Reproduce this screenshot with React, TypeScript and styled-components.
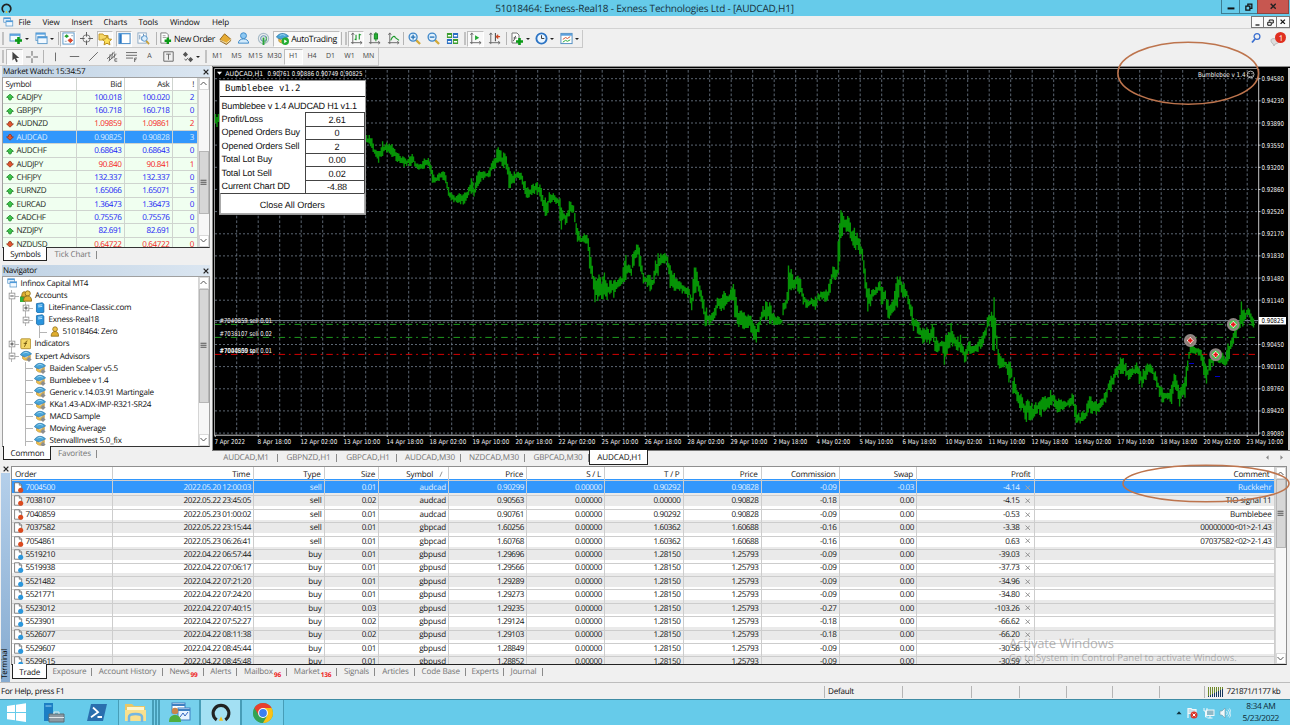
import React from "react";
import styled, { createGlobalStyle, css } from "styled-components";

const GlobalStyle = createGlobalStyle`
  * { box-sizing: border-box; }
  html, body { margin: 0; padding: 0; overflow: hidden; }
  body {
    font-family: "Open Sans", "Noto Sans", sans-serif;
    font-size: 8.1px;
    letter-spacing: -0.36px;
    color: #0c0c0c;
    text-rendering: geometricPrecision;
  }
  svg { display: block; flex: none; }
`;

/* ---------- data ---------- */

const quotes: [string, string, string, string, boolean][] = [
  ["CADJPY", "100.018", "100.020", "2", true],
  ["GBPJPY", "160.718", "160.718", "0", true],
  ["AUDNZD", "1.09859", "1.09861", "2", false],
  ["AUDCAD", "0.90825", "0.90828", "3", false],
  ["AUDCHF", "0.68643", "0.68643", "0", true],
  ["AUDJPY", "90.840", "90.841", "1", false],
  ["CHFJPY", "132.337", "132.337", "0", true],
  ["EURNZD", "1.65066", "1.65071", "5", true],
  ["EURCAD", "1.36473", "1.36473", "0", true],
  ["CADCHF", "0.75576", "0.75576", "0", true],
  ["NZDJPY", "82.691", "82.691", "0", true],
  ["NZDUSD", "0.64722", "0.64722", "0", false],
];

const advisors = [
  "Baiden Scalper v5.5",
  "Bumblebee v 1.4",
  "Generic v.14.03.91 Martingale",
  "KKa1.43-ADX-IMP-R321-SR24",
  "MACD Sample",
  "Moving Average",
  "StenvallInvest 5.0_fix",
];

const orders = [
  ["7004500", "2022.05.20 12:00:03", "sell", "0.01", "audcad", "0.90299", "0.00000", "0.90292", "0.90828", "-0.09", "-0.03", "-4.14", "Ruckkehr"],
  ["7038107", "2022.05.22 23:45:05", "sell", "0.02", "audcad", "0.90563", "0.00000", "0.00000", "0.90828", "-0.18", "0.00", "-4.15", "TIO signal 11"],
  ["7040859", "2022.05.23 01:00:02", "sell", "0.01", "audcad", "0.90761", "0.00000", "0.90292", "0.90828", "-0.09", "0.00", "-0.53", "Bumblebee"],
  ["7037582", "2022.05.22 23:15:44", "sell", "0.01", "gbpcad", "1.60256", "0.00000", "1.60362", "1.60688", "-0.16", "0.00", "-3.38", "00000000<01>2-1.43"],
  ["7054861", "2022.05.23 06:26:41", "sell", "0.01", "gbpcad", "1.60768", "0.00000", "1.60362", "1.60688", "-0.16", "0.00", "0.63", "07037582<02>2-1.43"],
  ["5519210", "2022.04.22 06:57:44", "buy", "0.01", "gbpusd", "1.29696", "0.00000", "1.28150", "1.25793", "-0.09", "0.00", "-39.03", ""],
  ["5519938", "2022.04.22 07:06:17", "buy", "0.01", "gbpusd", "1.29566", "0.00000", "1.28150", "1.25793", "-0.09", "0.00", "-37.73", ""],
  ["5521482", "2022.04.22 07:21:20", "buy", "0.01", "gbpusd", "1.29289", "0.00000", "1.28150", "1.25793", "-0.09", "0.00", "-34.96", ""],
  ["5521771", "2022.04.22 07:24:20", "buy", "0.01", "gbpusd", "1.29273", "0.00000", "1.28150", "1.25793", "-0.09", "0.00", "-34.80", ""],
  ["5523012", "2022.04.22 07:40:15", "buy", "0.03", "gbpusd", "1.29235", "0.00000", "1.28150", "1.25793", "-0.27", "0.00", "-103.26", ""],
  ["5523901", "2022.04.22 07:52:27", "buy", "0.02", "gbpusd", "1.29124", "0.00000", "1.28150", "1.25793", "-0.18", "0.00", "-66.62", ""],
  ["5526077", "2022.04.22 08:11:38", "buy", "0.02", "gbpusd", "1.29103", "0.00000", "1.28150", "1.25793", "-0.18", "0.00", "-66.20", ""],
  ["5529607", "2022.04.22 08:45:44", "buy", "0.01", "gbpusd", "1.28849", "0.00000", "1.28150", "1.25793", "-0.09", "0.00", "-30.56", ""],
  ["5529615", "2022.04.22 08:45:48", "buy", "0.01", "gbpusd", "1.28852", "0.00000", "1.28150", "1.25793", "-0.09", "0.00", "-30.59", ""],
];

const orderHeads = ["Order", "Time", "Type", "Size", "Symbol", "Price", "S / L", "T / P", "Price", "Commission", "Swap", "Profit", "Comment"];

const dates = [
  "7 Apr 2022", "8 Apr 18:00", "12 Apr 02:00", "13 Apr 10:00", "14 Apr 18:00", "18 Apr 02:00", "19 Apr 10:00",
  "20 Apr 18:00", "22 Apr 02:00", "25 Apr 10:00", "26 Apr 18:00", "28 Apr 02:00", "29 Apr 10:00", "2 May 18:00",
  "4 May 02:00", "5 May 10:00", "6 May 18:00", "10 May 02:00", "11 May 10:00", "12 May 18:00", "16 May 02:00",
  "17 May 10:00", "18 May 18:00", "20 May 02:00", "23 May 10:00",
];

const prices = [
  "0.94580", "0.94230", "0.93890", "0.93550", "0.93200", "0.92860", "0.92520", "0.92170", "0.91830",
  "0.91480", "0.91140", "", "0.90450", "0.90110", "0.89760", "0.89420", "0.89080",
];

// x, high, low of the price series
const series = [
  366,136,143, 369,136,144, 372,138,148, 375,150,157, 378,151,164, 381,143,160, 385,141,154, 389,143,152, 393,144,157, 397,152,163,
  401,157,163, 405,158,167, 409,157,165, 413,154,165, 417,163,169, 421,163,169, 425,158,167, 429,158,166,
  432,170,182, 435,178,185, 438,173,181, 441,171,178, 445,172,183, 448,187,195, 452,195,201, 456,197,203,
  459,193,202, 463,195,205, 466,193,202, 469,187,195, 471,178,192, 474,187,197, 478,172,185, 483,171,180,
  489,171,178, 492,158,173, 495,153,175, 499,148,160, 503,154,169, 507,155,170, 509,167,189, 512,171,186,
  517,173,179, 521,172,180, 525,180,195, 528,188,197, 533,185,193, 538,182,194, 542,188,208, 545,200,223,
  547,200,217, 550,191,202, 555,195,202, 559,197,207, 561,203,236, 563,207,218, 566,215,228, 569,203,215,
  573,203,213, 575,208,227, 577,224,243, 580,236,245, 585,234,242, 588,236,247, 590,245,277, 593,270,282,
  595,280,302, 599,270,298, 602,282,304, 605,269,293, 607,283,302, 611,277,292, 614,283,297, 617,278,288,
  622,277,285, 625,255,282, 629,263,275, 631,268,279, 633,252,267, 638,243,258, 641,252,277, 643,273,282,
  649,275,290, 653,277,289, 655,262,278, 659,253,272, 663,253,265, 667,253,263, 670,267,285, 673,270,292,
  679,280,290, 684,286,294, 689,287,297, 692,297,315, 694,267,300, 697,267,288, 700,285,297, 703,293,312,
  705,308,327, 709,312,323, 713,313,322, 717,300,312, 720,293,310, 725,293,307, 729,295,305, 733,283,300,
  735,288,317, 738,308,325, 743,312,327, 747,317,330, 750,310,327, 753,323,337, 756,327,342, 759,317,333,
  763,306,320, 768,301,318, 772,307,327, 775,315,325, 782,318,325, 783,302,318, 787,298,305, 788,261,300,
  791,270,290, 793,277,291, 798,270,290, 801,280,293, 803,293,303, 808,299,309, 812,297,305, 815,297,309,
  819,292,300, 823,288,300, 827,290,302, 830,278,293, 833,267,282, 837,268,277, 839,223,277, 841,209,240,
  844,216,227, 849,217,235, 852,228,245, 855,230,250, 859,238,251, 863,247,260, 865,267,290, 868,287,313,
  871,290,303, 875,287,295, 880,282,290, 881,287,306, 885,290,298, 888,297,318, 890,303,320, 893,302,312,
  897,278,311, 900,275,287, 903,282,296, 907,290,298, 911,303,318, 913,313,333, 916,318,330, 919,323,337,
  923,328,342, 927,323,347, 930,332,343, 933,322,343, 935,337,354, 939,342,350, 942,337,347, 944,337,368,
  947,337,357, 951,325,342, 953,330,347, 957,337,353, 961,337,353, 965,347,363, 968,340,355, 972,345,355,
  977,342,353, 981,337,348, 985,330,340, 988,313,327, 991,312,323, 993,310,353, 994,298,350, 996,323,340,
  998,345,367, 1002,355,367, 1007,362,370, 1009,362,382, 1011,360,373, 1013,377,397, 1016,383,400, 1020,392,408,
  1023,397,412, 1026,403,424, 1028,397,418, 1033,403,421, 1037,402,412, 1041,398,415, 1045,397,410, 1051,389,407,
  1053,393,403, 1058,397,413, 1063,402,410, 1068,400,407, 1073,392,405, 1076,407,425, 1080,415,423, 1085,410,422,
  1089,395,413, 1093,402,415, 1097,403,413, 1102,398,407, 1106,390,402, 1108,380,393, 1112,377,390, 1116,365,380,
  1120,357,373, 1124,360,372, 1129,370,383, 1133,368,375, 1137,362,375, 1142,373,390, 1147,363,377, 1151,365,373,
  1156,372,383, 1160,383,400, 1163,390,402, 1168,390,400, 1171,388,406, 1174,372,390, 1177,375,397, 1179,390,407,
  1183,383,398, 1186,370,395, 1188,352,373, 1190,343,357, 1197,348,353, 1202,352,362, 1205,363,380, 1207,368,382,
  1211,353,368, 1217,348,360, 1221,352,365, 1225,357,369, 1228,345,362, 1232,337,350, 1235,323,340, 1239,323,328,
  1241,303,327, 1245,310,320, 1248,307,317, 1251,310,323, 1254,317,327,
];

const rand = (n: number) => {
  const v = Math.sin(n * 12.9898) * 43758.5453;
  return v - Math.floor(v);
};

const buildBars = () => {
  let d = "M215.5 114V123M217 117V127M218.4 114V122";
  let seg = 0;
  let n = 0;
  for (let x = 366.5; x < 1254; x += 1.344) {
    while (seg + 3 < series.length - 3 && series[seg + 3] < x) seg += 3;
    const [x0, h0, l0, x1, h1, l1] = series.slice(seg, seg + 6);
    const t = Math.min(1, Math.max(0, (x - x0) / (x1 - x0)));
    const hi = h0 + (h1 - h0) * t;
    const lo = l0 + (l1 - l0) * t;
    const size = Math.min(lo - hi, 18);
    const a = hi + (rand(n) - 0.3) * size * 0.5;
    const b = lo - (rand(n + 500) - 0.3) * size * 0.5;
    d += `M${x.toFixed(1)} ${a.toFixed(1)}V${b.toFixed(1)}`;
    n += 1;
  }
  return d;
};

const bars = buildBars();

/* ---------- shell ---------- */

const Desktop = styled.div`
  position: relative;
  width: 1290px;
  height: 725px;
  display: flex;
  flex-direction: column;
  background: #f0f0f0;
  overflow: hidden;
  white-space: nowrap;
`;

const TitleBar = styled.div`
  height: 16px;
  flex: none;
  display: flex;
  align-items: center;
  background: #66cbea;
  padding-left: 1px;
`;

const TitleText = styled.div`
  flex: 1;
  padding-left: 55px;
  text-align: center;
  font-size: 10px;
  letter-spacing: -0.19px;
  color: #17313b;
`;

const WindowButtons = styled.div`
  display: flex;
  align-self: flex-start;
  height: 14px;
  padding-right: 1px;
`;

const WindowButton = styled.div<{ $w: number; $close?: boolean }>`
  width: ${(p) => p.$w}px;
  height: 14px;
  display: flex;
  align-items: center;
  justify-content: center;
  border: 1px solid ${(p) => (p.$close ? "#8d4540" : "#3d7d92")};
  border-top: 0;
  margin-left: -1px;
  background: ${(p) => (p.$close ? "#c75750" : "#66cbea")};
`;

const MenuBar = styled.div`
  height: 13px;
  flex: none;
  display: flex;
  align-items: center;
  background: #efefef;
  border-bottom: 1px solid #d2d2d2;
  padding-left: 3px;
`;

const MenuItem = styled.span<{ $w: number }>`
  width: ${(p) => p.$w}px;
  letter-spacing: -0.14px;
`;

const MdiButtons = styled.div`
  display: flex;
  margin-left: auto;
`;

const MdiButton = styled.div`
  width: 13px;
  height: 12px;
  display: flex;
  align-items: center;
  justify-content: center;
  background: #fafafa;
  border: 1px solid #777;
  border-left-width: 0;
  &:first-child { border-left-width: 1px; }
`;

const ToolbarArea = styled.div`
  height: 37px;
  flex: none;
  display: flex;
  justify-content: space-between;
  padding-top: 1px;
`;

const Toolbars = styled.div`
  display: flex;
  flex-direction: column;
  align-items: flex-start;
`;

const Toolbar = styled.div`
  height: 18px;
  display: flex;
  align-items: center;
  border: solid #c9c9c9;
  border-width: 0 1px 1px 0;
`;

const Slot = styled.div<{ $w: number; $on?: boolean }>`
  width: ${(p) => p.$w}px;
  height: 16px;
  display: flex;
  align-items: center;
  justify-content: center;
  gap: 2px;
  ${(p) =>
    p.$on &&
    css`
      background: #f9f9f9;
      border: 1px solid #bdbdbd;
      border-right-color: #fff;
      border-bottom-color: #fff;
    `}
`;

const Period = styled(Slot)`
  font-size: 7px;
  letter-spacing: 0;
  color: #444;
`;

const Rule = styled.div<{ $w: number }>`
  width: ${(p) => p.$w}px;
  height: 13px;
  display: flex;
  justify-content: center;
  &::after { content: ""; width: 1px; background: #b4b4b4; }
`;

const Grip = styled.div<{ $w: number }>`
  width: ${(p) => p.$w}px;
  height: 13px;
  display: flex;
  justify-content: center;
  &::after { content: ""; width: 2px; background: #c2c2c2; }
`;

const Gap = styled.div`
  width: 3px;
`;

const Caret = styled.div`
  border: 2px solid transparent;
  border-top: 2.5px solid #222;
  border-bottom: 0;
`;

const ToolLabel = styled.span`
  font-size: 8.7px;
  letter-spacing: -0.4px;
`;

const ToolEnd = styled.div`
  display: flex;
  gap: 9px;
  padding: 2px 3px 0 0;
`;

/* ---------- side panels ---------- */

const Workspace = styled.div`
  height: 398px;
  flex: none;
  display: flex;
`;

const Side = styled.div`
  width: 212px;
  display: flex;
  flex-direction: column;
  padding: 0 2px 0 2px;
`;

const PanelTitle = styled.div`
  height: 11px;
  display: flex;
  align-items: center;
  justify-content: space-between;
  padding: 0 1px 0 1px;
  background: linear-gradient(90deg, #bfd2e4, #dbe6f1);
  letter-spacing: -0.3px;
`;

const PanelBody = styled.div<{ $h: number }>`
  height: ${(p) => p.$h}px;
  display: flex;
  background: #fff;
  border: solid #a0a0a0;
  border-width: 1px 1px 0 1px;
  border-bottom: 1px solid #333;
  overflow: hidden;
`;

const Quotes = styled.div`
  flex: 1;
  display: flex;
  flex-direction: column;
`;

const QuoteRow = styled.div<{ $head?: boolean; $on?: boolean; $up?: boolean }>`
  display: grid;
  grid-template-columns: 73.5px 48.5px 48px 1fr;
  height: ${(p) => (p.$head ? 12.7 : 13.38)}px;
  flex: none;
  background: ${(p) => (p.$head ? "#fff" : p.$on ? "#3297fc" : "#f0fff0")};
  color: ${(p) => (p.$head ? "#222" : p.$on ? "#d9edff" : p.$up ? "#1722f5" : "#f5241c")};
`;

const QuoteCell = styled.div<{ $name?: boolean; $dark?: boolean }>`
  display: flex;
  align-items: center;
  gap: 3px;
  justify-content: ${(p) => (p.$name ? "flex-start" : "flex-end")};
  padding: 0.6px 2.5px 0;
  border-right: 1px solid #cfd4cf;
  border-bottom: 1px solid #cfd4cf;
  color: ${(p) => (p.$dark ? "#1d2b1d" : "inherit")};
`;

const ScrollTrack = styled.div<{ $w?: number }>`
  width: ${(p) => p.$w ?? 11.5}px;
  flex: none;
  display: flex;
  flex-direction: column;
  background: #f7f7f7;
  border-left: 1px solid #d5d5d5;
`;

const ScrollEnd = styled.div`
  height: 11.5px;
  flex: none;
  display: flex;
  align-items: center;
  justify-content: center;
  background: #fff;
  border: 1px solid #d9d9d9;
`;

const ScrollSpace = styled.div<{ $h: number }>`
  height: ${(p) => p.$h}px;
`;

const Thumb = styled.div<{ $h: number }>`
  height: ${(p) => p.$h}px;
  display: flex;
  align-items: center;
  justify-content: center;
  background: #d6d6d6;
  border: 1px solid #b6b6b6;
`;

const Filler = styled.div`
  flex: 1;
`;

const PanelTabs = styled.div`
  height: 14px;
  display: flex;
  padding-left: 1px;
`;

const Tab = styled.div<{ $w: number; $on?: boolean }>`
  width: ${(p) => p.$w}px;
  height: ${(p) => (p.$on ? 14.5 : 13)}px;
  display: flex;
  align-items: center;
  justify-content: center;
  color: ${(p) => (p.$on ? "#111" : "#747474")};
  letter-spacing: -0.15px;
  padding-left: 1px;
  ${(p) =>
    p.$on
      ? css`
          background: #fff;
          border: solid #222;
          border-width: 0 1px 1.5px 1px;
          margin-top: -1px;
          padding-top: 2px;
        `
      : css`
          background: linear-gradient(#8a8a8a, #8a8a8a) right 3px / 1px 8px no-repeat;
        `}
`;

const Tree = styled.div`
  flex: 1;
  padding-top: 0.5px;
  overflow: hidden;
`;

const TreeRow = styled.div<{ $pad: number; $line?: number; $outer?: boolean }>`
  height: 12.08px;
  display: flex;
  align-items: center;
  gap: 3.5px;
  padding-left: ${(p) => p.$pad}px;
  letter-spacing: -0.27px;
  background-repeat: no-repeat;
  ${(p) =>
    p.$line !== undefined &&
    css`
      background-image: linear-gradient(#b5b5b5, #b5b5b5), linear-gradient(#b5b5b5, #b5b5b5)
        ${p.$outer ? ", linear-gradient(#b5b5b5, #b5b5b5)" : ""};
      background-size: 1px 100%, 8px 1px, 1px 100%;
      background-position: ${p.$line}px 0, ${p.$line}px 6px, 8px 0;
    `}
`;

/* ---------- chart ---------- */

const ChartColumn = styled.div`
  flex: 1;
  display: flex;
  flex-direction: column;
`;

const ChartFrame = styled.div`
  position: relative;
  height: 384px;
  background: #000;
`;

const EaPanel = styled.div`
  position: absolute;
  left: 6.5px;
  top: 14px;
  width: 147.5px;
  background: #fff;
  border: 1px solid #999;
  font-family: "Liberation Sans", Arial, sans-serif;
  font-size: 9.1px;
  letter-spacing: -0.14px;
  color: #111;
`;

const EaTitle = styled.div`
  height: 16px;
  display: flex;
  align-items: center;
  padding-left: 5.5px;
  border-bottom: 1px solid #222;
  font-family: "DejaVu Sans Mono", monospace;
  font-size: 9px;
  letter-spacing: -0.03px;
`;

const EaLine = styled.div`
  height: 15.3px;
  padding: 3.5px 0 0 2px;
  letter-spacing: -0.24px;
`;

const EaRow = styled.div`
  display: flex;
  height: 13.5px;
  align-items: center;
  padding-left: 2px;
`;

const EaLabel = styled.div`
  flex: 1;
  padding-bottom: 1px;
`;

const EaValue = styled.div`
  width: 60px;
  height: 13.5px;
  display: flex;
  align-items: center;
  justify-content: center;
  padding-left: 4px;
  border: 1px solid #444;
  border-bottom: 0;
`;

const EaButton = styled.div`
  height: 20.5px;
  display: flex;
  align-items: center;
  justify-content: center;
  padding-top: 3px;
  letter-spacing: -0.05px;
  border: 1px solid #aaa;
  border-top-color: #444;
`;

const ChartTabs = styled.div`
  height: 14px;
  display: flex;
  border-top: 1px solid #777;
  background: #f0f0f0;
`;

const ChartTab = styled(Tab)`
  padding-left: 2px;
`;

const TabArrows = styled.div`
  margin-left: auto;
  display: flex;
  gap: 9px;
  align-items: center;
  padding-right: 6px;
`;

/* ---------- terminal ---------- */

const Terminal = styled.div`
  height: 219px;
  flex: none;
  display: flex;
  padding: 2.3px 3px 0 1px;
  border-bottom: 1px solid #bdbdbd;
`;

const TerminalRail = styled.div`
  width: 10px;
  display: flex;
  flex-direction: column;
  align-items: center;
`;

const RailBody = styled.div`
  flex: 1;
  width: 9px;
  margin: 1px 1px 0 0;
  display: flex;
  background: linear-gradient(#b4cfea, #86abd0);
`;

const RailLabel = styled.span`
  writing-mode: vertical-rl;
  transform: rotate(180deg);
  line-height: 9px;
  font-size: 7.8px;
  padding-top: 3px;
  letter-spacing: -0.3px;
`;

const TerminalMain = styled.div`
  flex: 1;
  display: flex;
  flex-direction: column;
`;

const TableBox = styled.div`
  height: 199px;
  display: flex;
  background: #fff;
  border: 1px solid #8f8f8f;
  border-bottom: 1.5px solid #222;
  overflow: hidden;
`;

const Table = styled.div`
  flex: 1;
`;

const Row = styled.div<{ $head?: boolean; $on?: boolean; $alt?: boolean }>`
  display: grid;
  grid-template-columns: 100.5px 141.5px 70.5px 54.5px 70px 78px 78px 78.5px 78px 78px 77.5px 117.5px 1fr;
  height: ${(p) => (p.$head ? 12.2 : 13.42)}px;
  background: ${(p) => (p.$on ? "#3297fc" : p.$alt ? "#eaeaea" : "#fff")};
  color: ${(p) => (p.$on ? "#e2f1ff" : "#141414")};
  letter-spacing: -0.42px;
`;

const Cell = styled.div<{ $first?: boolean; $pad?: number; $words?: boolean }>`
  display: flex;
  align-items: center;
  justify-content: ${(p) => (p.$first ? "flex-start" : "flex-end")};
  gap: ${(p) => (p.$first ? 2 : 4)}px;
  padding: 0 ${(p) => p.$pad ?? 2}px 0 ${(p) => (p.$first ? 0.5 : 0)}px;
  border-right: 1px solid #cdcdcd;
  border-bottom: 1px solid #cdcdcd;
  ${(p) => p.$words && "letter-spacing: -0.2px;"}
`;

const HeadCell = styled(Cell)`
  padding: 1.5px ${(p) => p.$pad ?? 3}px 0 ${(p) => (p.$first ? 3 : 0)}px;
  letter-spacing: -0.2px;
`;

const Badge = styled.sub`
  align-self: flex-end;
  color: #ee2222;
  font-size: 6.5px;
  font-weight: 700;
  line-height: 7px;
  padding-left: 1px;
  letter-spacing: -0.2px;
`;

const StatusBar = styled.div`
  height: 15.5px;
  flex: none;
  display: flex;
  align-items: center;
  padding: 2px 0 0 1px;
`;

const StatusCell = styled.div<{ $w: number; $first?: boolean; $tight?: boolean }>`
  width: ${(p) => p.$w}px;
  height: 12px;
  display: flex;
  align-items: center;
  gap: 3px;
  padding-left: ${(p) => (p.$first ? 0 : 3)}px;
  border-left: ${(p) => (p.$first ? 0 : 1)}px solid #b5b5b5;
  letter-spacing: ${(p) => (p.$tight ? -0.48 : -0.24)}px;
`;

const Taskbar = styled.div`
  height: 27px;
  flex: none;
  display: flex;
  align-items: center;
  justify-content: space-between;
  background: #66cbea;
  border-top: 1px solid #3f8ca5;
`;

const TaskButtons = styled.div`
  display: flex;
  height: 100%;
`;

const TaskButton = styled.div<{ $w: number; $open?: boolean; $on?: boolean }>`
  width: ${(p) => p.$w}px;
  display: flex;
  align-items: center;
  justify-content: center;
  border: solid ${(p) => (p.$open || p.$on ? "#479db7" : "transparent")};
  border-width: 0 1px;
  background: ${(p) => (p.$on ? "#a3e0f3" : p.$open ? "#76d0ec" : "transparent")};
`;

const Tray = styled.div`
  display: flex;
  align-items: center;
  gap: 4.5px;
  padding-right: 11px;
`;

const Clock = styled.div`
  display: flex;
  flex-direction: column;
  align-items: center;
  margin-left: 7px;
  font-size: 8.4px;
  line-height: 11.2px;
  letter-spacing: -0.36px;
  color: #0d2a35;
`;

/* ---------- overlays ---------- */

const Overlay = styled.svg`
  position: absolute;
  left: 0;
  top: 0;
  pointer-events: none;
`;

const Watermark = styled.div`
  position: absolute;
  left: 1009px;
  top: 634px;
  color: rgba(120, 120, 120, 0.55);
  font-size: 9.6px;
  line-height: 12px;
  letter-spacing: 0;
`;

const WatermarkTitle = styled.div`
  font-size: 13px;
  line-height: 18px;
  letter-spacing: -0.12px;
`;

/* ---------- icons ---------- */

const Icon = ({ size = 13, children }: { size?: number; children: React.ReactNode }) => (
  <svg width={size} height={size} viewBox="0 0 14 14" fill="none">{children}</svg>
);

const Plus = ({ x = 7, y = 6 }) => (
  <path d={`M${x + 3} ${y}v7M${x - 0.5} ${y + 3.5}h7`} stroke="#0b9a17" strokeWidth="2.6" />
);

const Win = ({ x, y, w = 9, h = 7 }: { x: number; y: number; w?: number; h?: number }) => (
  <g>
    <rect x={x} y={y} width={w} height={h} fill="#f2f9ff" stroke="#5a97c9" />
    <path d={`M${x} ${y + 1}h${w}`} stroke="#4d9bdc" strokeWidth="1.6" />
  </g>
);

const NewChartIcon = () => <Icon size={14}><Win x={1} y={2} w={10} h={7} /><Plus x={6.5} y={5} /></Icon>;
const ProfilesIcon = () => <Icon><Win x={1} y={1} w={10} h={8} /><Win x={3} y={5} w={10} h={7.5} /></Icon>;
const WindowsIcon = () => (
  <Icon size={10.5}><Win x={1} y={1} w={9} h={6} /><Win x={4} y={5} w={9} h={7} /></Icon>
);
const WatchIcon = () => (
  <Icon><rect x="1" y="1" width="12" height="12" fill="#fff" stroke="#5a97c9" /><path d="M5 2.5l2.5 2L5 6.500l-2.500-2z" fill="#23a22d" /><path d="M9 7l2.500 2L9 11.500 6.500 9z" fill="#d8482f" stroke="#d8482f" /><path d="M3 10h2M10 4h2" stroke="#8aa4b8" /></Icon>
);
const TargetIcon = () => (
  <Icon><circle cx="7" cy="7" r="4" stroke="#777" /><path d="M7 0v5M7 9v5M0 7h5M9 7h5" stroke="#555" /></Icon>
);
const StarFolderIcon = () => (
  <Icon size={14}><path d="M1 2h4l1 1.5h4V8H1z" fill="#f6d766" stroke="#c49a2c" /><path d="M9 4l1.4 2.9 3.2.4-2.3 2.2.6 3.3L9 11.2l-2.9 1.6.6-3.3-2.3-2.2 3.2-.4z" fill="#ffe25a" stroke="#b98e1f" /></Icon>
);
const NavPaneIcon = () => (
  <Icon><rect x="1" y="1.5" width="12" height="11" fill="#fff" stroke="#3b83c4" /><path d="M2.7 2v10" stroke="#2a78c5" strokeWidth="2.6" /><path d="M1 2h12" stroke="#5ba0dc" /></Icon>
);
const DataIcon = () => (
  <Icon><rect x="1" y="1" width="9" height="11" fill="#fff" stroke="#89a7c2" /><path d="M3 3v5M5 5v4M7 2v5" stroke="#6a90b5" /><circle cx="8" cy="7" r="3" fill="#dceefb" stroke="#4d8fc9" /><path d="M10 9.5l3 3.5" stroke="#c9a13a" strokeWidth="2" /></Icon>
);
const OrderPlusIcon = () => (
  <Icon><path d="M2 1h6l2 2v9H2z" fill="#fff" stroke="#777" /><path d="M4 4h3M4 6h4" stroke="#999" /><Plus x={6.5} y={6} /></Icon>
);
const BookIcon = () => (
  <Icon size={13}><path d="M1 8l5-6 7 6-5 4.5z" fill="#e6ab33" stroke="#94661a" /><path d="M1.5 9l6.5 3 5-4" stroke="#fff2c4" /><path d="M1 9.5l7 4L13 9" stroke="#94661a" /></Icon>
);
const PersonIcon = () => (
  <Icon><circle cx="7" cy="4" r="3.2" fill="#8cc7f2" stroke="#3a87c7" /><path d="M1.5 12c0-3 2.5-4.5 5.5-4.5s5.5 1.5 5.5 4.5z" fill="#d2eafb" stroke="#3a87c7" /></Icon>
);
const SignalIcon = () => (
  <Icon><circle cx="7" cy="7" r="5.5" stroke="#a9bcc8" strokeWidth="1.3" /><circle cx="7" cy="7" r="3" stroke="#6b95b5" strokeWidth="1.2" /><path d="M7 6v8" stroke="#2aa537" strokeWidth="2" /><path d="M10 5c1 3 0 5-2 7" stroke="#45b150" /></Icon>
);
const HatIcon = ({ size = 12, go = false }) => (
  <Icon size={size}>
    <path d="M3 7l4 2.5L12 6v3c-2 3.5-6 4-9 1z" fill="#f3c34a" stroke="#a9802a" strokeWidth=".7" />
    <path d="M.5 5.5C3 1 9 0 13.5 4.5 11 6 8 7.5 6 7.6 4 7.5 2 6.8.5 5.5z" fill="#49a5d8" stroke="#2573a5" strokeWidth=".8" />
    <path d="M4 3.8c2-1.3 4-1.3 6 0" stroke="#a8dcf5" />
    {go ? (
      <g><circle cx="10" cy="10" r="4" fill="#24ad32" /><path d="M8.8 8v4l3.2-2z" fill="#fff" /></g>
    ) : (
      <path d="M10.5 8l3 3-3 3-3-3z" fill="#8d8d8d" />
    )}
  </Icon>
);
const AxisBars = () => <path d="M3 1v12M1 11.5h12M1.5 3L3 1l1.5 2M11 10l2 1.5-2 1.5" stroke="#666" />;
const BarsIcon = () => <Icon><AxisBars /><path d="M6.5 3v6M10 2v6M5 8h1.5M10 3h2" stroke="#1d9a2c" strokeWidth="1.2" /></Icon>;
const CandleIcon = () => <Icon><AxisBars /><path d="M8.5 0v10" stroke="#14821f" /><rect x="6.8" y="2" width="3.5" height="5.5" fill="#25b235" stroke="#14821f" /></Icon>;
const LineIcon = () => <Icon><AxisBars /><path d="M4 9c2-5 4-5 5-3l4 3" stroke="#1d9a2c" strokeWidth="1.2" /></Icon>;
const ZoomIcon = ({ plus = false }) => (
  <Icon><path d="M8.5 8.5l4.5 4.5" stroke="#d3a938" strokeWidth="2.4" /><circle cx="5.5" cy="5.5" r="4.3" fill="#dff0fd" stroke="#3f87c8" strokeWidth="1.4" /><path d={plus ? "M3 5.5h5M5.5 3v5" : "M3 5.5h5"} stroke="#2470b5" strokeWidth="1.4" /></Icon>
);
const TilesIcon = () => (
  <Icon><path d="M1 1h5.5v5.5H1zM7.5 7.5H13V13H7.5z" fill="#3c9d2f" /><path d="M7.5 1H13v5.5H7.5zM1 7.5h5.5V13H1z" fill="#2a6fc2" /><path d="M2 4h3.5M8.5 4H12M2 10.5h3.5M8.5 10.5H12" stroke="#fff" strokeWidth="1.8" /></Icon>
);
const ScrollIcon = () => <Icon><AxisBars /><path d="M6.5 3.5v5.5L11 6.2z" fill="#22a832" /></Icon>;
const ShiftIcon = () => <Icon><AxisBars /><path d="M8 1v9" stroke="#555" strokeWidth="1.2" /><path d="M13 5H9.5M11 3L9 5l2 2" stroke="#cf4a26" strokeWidth="1.3" /></Icon>;
const IndicatorIcon = () => <Icon size={14}><path d="M2 1h5l2 2v8H2z" fill="#fff" stroke="#777" /><path d="M6 4c-2 0-1 5-3 5M3.5 6h3" stroke="#555" /><Plus x={6.5} y={6} /></Icon>;
const ClockIcon = () => <Icon><circle cx="7" cy="7" r="5.5" fill="#eaf5ff" stroke="#2c74c4" strokeWidth="2" /><path d="M7 3.5V7h3" stroke="#333" /></Icon>;
const TemplateIcon = () => <Icon><rect x="1" y="1.5" width="12" height="11" fill="#fff" stroke="#4c8ac0" /><path d="M1 3h12" stroke="#5ba0dc" strokeWidth="2" /><path d="M3 8l3-2 2 1 3-2" stroke="#cf4a26" /><path d="M3 11l3-2 2 1 3-1.5" stroke="#22a832" /></Icon>;

const CursorIcon = () => <Icon size={12}><path d="M4 1v10l2.5-2.2L8.5 13l1.8-1-1.9-3.8H12z" fill="#444" /></Icon>;
const CrossIcon = () => <Icon size={12}><path d="M7 0v5.5M7 8.5V14M0 7h5.5M8.5 7H14" stroke="#666" strokeWidth="1.2" /></Icon>;
const LineTool = ({ d, size = 11 }: { d: string; size?: number }) => (
  <Icon size={size}><path d={d} stroke="#666" strokeWidth="1.2" /></Icon>
);
const ArrowsTool = () => <Icon size={12}><path d="M1 4l3-3 3 3-3 3zM7 10l3-3 3 3-3 3z" fill="#555" /><path d="M3 9l1.5 2L7 8" stroke="#555" /></Icon>;

const CloseX = ({ color = "#222", size = 6, w = 2 }) => (
  <Icon size={size}><path d="M1.5 1.5l11 11M12.5 1.5l-11 11" stroke={color} strokeWidth={w * 1.5} /></Icon>
);
const Chevron = ({ up = false }) => (
  <Icon size={7}><path d={up ? "M1 10l6-6 6 6" : "M1 4l6 6 6-6"} stroke="#555" strokeWidth="2" /></Icon>
);
const Lines = () => <Icon size={7}><path d="M1 2.5h12M1 6.5h12M1 10.5h12" stroke="#555" strokeWidth="2" /></Icon>;

const Tick = ({ up }: { up: boolean }) => (
  <Icon size={8}>
    <path
      d={up ? "M7 2l6 5.5-3.5.8V11L7 12.5 4.5 11V8.3L1 7.5z" : "M7 12.5L13 7l-3.5-.8V3.5L7 2 4.5 3.5v2.7L1 7z"}
      fill={up ? "#3cc64a" : "#e5552d"}
      stroke={up ? "#1a7e25" : "#8d3119"}
      strokeWidth="1.3"
    />
  </Icon>
);

const SheetIcon = ({ sell }: { sell: boolean }) => (
  <Icon size={11}><path d="M2 1h6l3 3v9H2z" fill="#fff" stroke="#666" /><path d="M8 1v3h3" stroke="#666" /><circle cx="9.8" cy="10.5" r="3.2" fill={sell ? "#dc4a1f" : "#2b97dd"} /></Icon>
);

const Expander = ({ open }: { open: boolean }) => (
  <Icon size={8}><rect x="2" y="2" width="10" height="10" fill="#fff" stroke="#8f8f8f" strokeWidth="1.4" /><path d={open ? "M4 7h6" : "M4 7h6M7 4v6"} stroke="#333" strokeWidth="1.5" /></Icon>
);
const AccountIcon = ({ size = 13, two = false }) => (
  <Icon size={size}>
    {two && <path d="M0 14V8l3-2 3 2v6z" fill="#31b33c" />}
    {two && <path d="M2 8c0-4 1-6 3-6s2 3 2 6z" fill="#e0ad2e" stroke="#8e6d17" />}
    <circle cx="9" cy="4" r="3" fill="#efc54a" stroke="#8e6d17" />
    <path d="M4 13c0-4 2-6 5-6s4.5 2 4.5 6z" fill="#e0ad2e" stroke="#8e6d17" />
  </Icon>
);
const ServerIcon = () => <Icon size={11.5}><path d="M3 2l7-1 2 1.5v10L5 13.5 3 12z" fill="#2a94dd" stroke="#1a6cab" /><path d="M5 4l5-.6M5 6l5-.6" stroke="#d6efff" /></Icon>;
const IndicatorsIcon = () => <Icon size={11.5}><rect x="1" y="1" width="12" height="12" rx="1" fill="#f4d766" stroke="#a98524" /><path d="M9 3.5c-2.5-.5-2 7-4 7M4.5 6.5h4" stroke="#6a4e0a" strokeWidth="1.2" /></Icon>;

const QLogo = ({ size = 11 }) => (
  <Icon size={size}><path d="M4 11.8a5.5 5.5 0 1 1 6 0" stroke="#222" strokeWidth="2.2" /><path d="M5.5 12.5L7 9.5l1.5 3z" fill="#f2c21a" /></Icon>
);

/* ---------- sections ---------- */

const Dropdown = ({ w, children }: { w: number; children: React.ReactNode }) => (
  <Slot $w={w}>{children}<Caret /></Slot>
);

const Scrollbar = ({ before, thumb, w }: { before: number; thumb: number; w?: number }) => (
  <ScrollTrack $w={w}>
    <ScrollEnd><Chevron up /></ScrollEnd>
    <ScrollSpace $h={before} />
    <Thumb $h={thumb}><Lines /></Thumb>
    <Filler />
    <ScrollEnd><Chevron /></ScrollEnd>
  </ScrollTrack>
);

const MainToolbar = () => (
  <Toolbar>
    <Grip $w={6} />
    <Dropdown w={26}><NewChartIcon /></Dropdown>
    <Dropdown w={24}><ProfilesIcon /></Dropdown>
    <Rule $w={4} />
    <Slot $w={16} $on><WatchIcon /></Slot>
    <Slot $w={21}><TargetIcon /></Slot>
    <Slot $w={16} $on><StarFolderIcon /></Slot>
    <Gap />
    <Slot $w={16} $on><NavPaneIcon /></Slot>
    <Slot $w={22}><DataIcon /></Slot>
    <Rule $w={4} />
    <Slot $w={58}><OrderPlusIcon /><ToolLabel>New Order</ToolLabel></Slot>
    <Slot $w={18}><BookIcon /></Slot>
    <Slot $w={19}><PersonIcon /></Slot>
    <Slot $w={20}><SignalIcon /></Slot>
    <Slot $w={67} $on><HatIcon size={13} go /><ToolLabel>AutoTrading</ToolLabel></Slot>
    <Rule $w={3} />
    <Grip $w={5} />
    <Slot $w={16} $on><BarsIcon /></Slot>
    <Slot $w={20}><CandleIcon /></Slot>
    <Slot $w={18}><LineIcon /></Slot>
    <Rule $w={3} />
    <Slot $w={18}><ZoomIcon plus /></Slot>
    <Slot $w={20}><ZoomIcon /></Slot>
    <Slot $w={19}><TilesIcon /></Slot>
    <Grip $w={5} />
    <Slot $w={17} $on><ScrollIcon /></Slot>
    <Slot $w={21}><ShiftIcon /></Slot>
    <Rule $w={3} />
    <Dropdown w={24}><IndicatorIcon /></Dropdown>
    <Dropdown w={25}><ClockIcon /></Dropdown>
    <Dropdown w={25}><TemplateIcon /></Dropdown>
  </Toolbar>
);

const LineToolbar = () => (
  <Toolbar>
    <Grip $w={6} />
    <Slot $w={17} $on><CursorIcon /></Slot>
    <Slot $w={18}><CrossIcon /></Slot>
    <Rule $w={5} />
    <Slot $w={19}><LineTool d="M7 2v11" /></Slot>
    <Slot $w={19}><LineTool d="M1 7h12" /></Slot>
    <Slot $w={19}><LineTool d="M1.5 12.5l11-11" /></Slot>
    <Slot $w={19}><LineTool d="M0 10l10-9M2 13L12 4M4 4l-1 8M7 2l-1 8M10 3L9 9M10 10h3M10 13h3M10 10v3" /></Slot>
    <Slot $w={18}><LineTool d="M0 2h14M0 5.5h14M0 9h9M11 14V9h3M11 11h2" /></Slot>
    <Period $w={19}>A</Period>
    <Period $w={19}><LineTool d="M1 1h12v12H1zM4 4h6M7 4v7" /></Period>
    <Dropdown w={25}><ArrowsTool /></Dropdown>
    <Grip $w={5} />
    {["M1", "M5", "M15", "M30", "H1", "H4", "D1", "W1", "MN"].map((p) => (
      <Period key={p} $w={p === "H4" ? 18 : 19} $on={p === "H1"}>{p}</Period>
    ))}
  </Toolbar>
);

const MarketWatch = () => (
  <>
    <PanelTitle>Market Watch: 15:34:57<CloseX /></PanelTitle>
    <PanelBody $h={170.5}>
      <Quotes>
        <QuoteRow $head>
          <QuoteCell $name>Symbol</QuoteCell>
          <QuoteCell>Bid</QuoteCell>
          <QuoteCell>Ask</QuoteCell>
          <QuoteCell>!</QuoteCell>
        </QuoteRow>
        {quotes.map(([name, bid, ask, spread, up]) => {
          const on = name === "AUDCAD";
          return (
            <QuoteRow key={name} $up={up} $on={on}>
              <QuoteCell $name $dark={!on}><Tick up={up} />{name}</QuoteCell>
              <QuoteCell>{bid}</QuoteCell>
              <QuoteCell>{ask}</QuoteCell>
              <QuoteCell>{spread}</QuoteCell>
            </QuoteRow>
          );
        })}
      </Quotes>
      <Scrollbar before={61} thumb={63} />
    </PanelBody>
    <PanelTabs>
      <Tab $w={44} $on>Symbols</Tab>
      <Tab $w={50}>Tick Chart</Tab>
    </PanelTabs>
  </>
);

const Navigator = () => (
  <>
    <PanelTitle>Navigator<CloseX /></PanelTitle>
    <PanelBody $h={170.5}>
      <Tree>
        <TreeRow $pad={3.5}><WindowsIcon />Infinox Capital MT4</TreeRow>
        <TreeRow $pad={5} $line={8}><Expander open /><AccountIcon two size={12} />Accounts</TreeRow>
        <TreeRow $pad={19} $line={22} $outer><Expander open={false} /><ServerIcon />LiteFinance-Classic.com</TreeRow>
        <TreeRow $pad={19} $line={22} $outer><Expander open /><ServerIcon />Exness-Real18</TreeRow>
        <TreeRow $pad={45} $line={36} $outer><AccountIcon size={11} />51018464: Zero</TreeRow>
        <TreeRow $pad={5} $line={8}><Expander open={false} /><IndicatorsIcon />Indicators</TreeRow>
        <TreeRow $pad={5} $line={8}><Expander open /><HatIcon />Expert Advisors</TreeRow>
        {advisors.map((a) => (
          <TreeRow key={a} $pad={31} $line={22}><HatIcon />{a}</TreeRow>
        ))}
      </Tree>
      <Scrollbar before={0} thumb={114} />
    </PanelBody>
    <PanelTabs>
      <Tab $w={48} $on>Common</Tab>
      <Tab $w={46}>Favorites</Tab>
    </PanelTabs>
  </>
);

const orderLines = [
  { y: 324.4, color: "#1f9a1f" },
  { y: 337.4, color: "#1f9a1f" },
  { y: 354.4, color: "#d40000" },
];

type LabelProps = { x: number; y: number; w: number; fill?: string; children: string };

const Label = ({ x, y, w, fill = "#f2f2f2", children }: LabelProps) => (
  <text
    x={x}
    y={y}
    textLength={w}
    lengthAdjust="spacingAndGlyphs"
    fill={fill}
    fontSize="6.6"
    fontFamily="'DejaVu Sans', sans-serif"
    letterSpacing="0"
  >
    {children}
  </text>
);

const Chart = () => (
  <svg width="1078" height="384" viewBox="212 66 1078 384">
    <rect x="212" y="66" width="1078" height="384" fill="#000" />
    <path d="M212.5 450V66.5H1290" stroke="#8d8d8d" fill="none" />
    <path d="M1289 68V450" stroke="#cfcfcf" strokeWidth="2" />
    <path d="M214.5 435V68.5H1258" stroke="#999" fill="none" />
    {Array.from({ length: 48 }, (_, i) => (
      <path key={i} d={`M${(236.7 + i * 21.5).toFixed(1)} 70V435`} stroke="#66727f" strokeWidth=".9" strokeDasharray="2.7 2" />
    ))}
    {prices.map((_, i) => (
      <path key={i} d={`M215 ${(78.7 + i * 22.15).toFixed(1)}H1258`} stroke="#66727f" strokeWidth=".9" strokeDasharray="2 2" />
    ))}
    <path d="M215 320.6H1258" stroke="#7b8896" />
    {orderLines.map((l) => (
      <path key={l.y} d={`M215 ${l.y}H1258`} stroke={l.color} strokeDasharray="6.5 3.8 1.8 3.8" />
    ))}
    <path d={bars} stroke="#069306" strokeWidth="1.4" />
    <path d="M1189 363.5h5M1215 376.5h5" stroke="#0000c8" />
    {[[1190.3, 340.5], [1215.7, 354.6], [1233.3, 324.5]].map(([x, y], i) => (
      <g key={x}>
        <circle cx={x} cy={y} r="5.3" fill={i === 0 ? "#8e7b6d" : "#48c748"} stroke="#8f8583" strokeWidth="2.2" />
        <path d={`M${x} ${y - 3.5}l3.5 3.5-3.5 3.5-3.5-3.5z`} fill="#fff" />
        <path d={`M${x} ${y - 2.3}v4.6M${x - 2.3} ${y}h4.6`} stroke="#e81414" strokeWidth="1.9" />
      </g>
    ))}
    <path d="M1258.7 69V435.2H214" stroke="#c8c8c8" fill="none" />
    {prices.map((p, i) => p && (
      <g key={p}>
        <path d={`M1258 ${78.7 + i * 22.15}h2.5`} stroke="#c8c8c8" />
        <Label x={1261.5} y={81.2 + i * 22.15} w={22.5}>{p}</Label>
      </g>
    ))}
    {dates.map((d, i) => (
      <g key={d}>
        <path d={`M${215.2 + i * 43} 435v2`} stroke="#c8c8c8" />
        <Label x={214.5 + i * 43} y={443.7} w={d.length * 3.06}>{d}</Label>
      </g>
    ))}
    <Label x={225.3} y={76} w={38}>AUDCAD,H1</Label>
    <Label x={267.5} y={76} w={95}>0.90761 0.90886 0.90749 0.90825</Label>
    <path d="M217 71.8h5l-2.5 3z" fill="#fff" />
    <Label x={219.5} y={323.2} w={52.5}>#7040859 sell 0.01</Label>
    <Label x={219.5} y={336.2} w={52.5}>#7038107 sell 0.02</Label>
    <Label x={219.5} y={353.2} w={52.5}>#7004500 sell 0.01</Label>
    <Label x={219.5} y={353.2} w={36}>#7040859 tp</Label>
    <Label x={1198} y={77} w={47.5}>Bumblebee v 1.4</Label>
    <g stroke="#ddd" fill="none" strokeWidth=".8">
      <circle cx="1250.6" cy="74.5" r="3.4" />
      <path d="M1249 73v1.2M1252 73v1.2M1248.7 75.8c1 1.3 2.8 1.3 3.8 0" />
    </g>
    <rect x="1259" y="317" width="27" height="7.5" fill="#fff" />
    <Label x={1261.5} y={323.3} w={22.5} fill="#000">0.90825</Label>
  </svg>
);

const eaRows = [
  ["Profit/Loss", "2.61"],
  ["Opened Orders Buy", "0"],
  ["Opened Orders Sell", "2"],
  ["Total Lot Buy", "0.00"],
  ["Total Lot Sell", "0.02"],
  ["Current Chart DD", "-4.88"],
];

const chartTabs: [string, number][] = [
  ["AUDCAD,M1", 66], ["GBPNZD,H1", 59], ["GBPCAD,H1", 60], ["AUDCAD,M30", 64],
  ["NZDCAD,M30", 64], ["GBPCAD,M30", 64], ["AUDCAD,H1", 59],
];

const terminalTabs: [string, number, string?][] = [
  ["Trade", 34.5], ["Exposure", 45], ["Account History", 71], ["News", 41, "99"], ["Alerts", 33.5], ["Mailbox", 50, "96"],
  ["Market", 50, "136"], ["Signals", 38], ["Articles", 40], ["Code Base", 50.5], ["Experts", 38], ["Journal", 39],
];

const headPad = (i: number) => (i === 4 ? 3 : i === 12 ? 4 : 3);

const Orders = () => (
  <Terminal>
    <TerminalRail>
      <CloseX />
      <RailBody><RailLabel>Terminal</RailLabel></RailBody>
    </TerminalRail>
    <TerminalMain>
      <TableBox>
        <Table>
          <Row $head>
            {orderHeads.map((h, i) => (
              <HeadCell key={i} $first={i === 0} $pad={headPad(i)}>{h}{i === 4 && <LineTool size={8} d="M5 12l4-9" />}</HeadCell>
            ))}
          </Row>
          {orders.map((o, r) => (
            <Row key={o[0]} $on={r === 0} $alt={r % 2 === 1}>
              {o.map((v, i) => (
                <Cell key={i} $first={i === 0} $words={i === 2 || i === 4 || (i === 12 && r < 3)}>
                  {i === 0 && <SheetIcon sell={o[2] === "sell"} />}
                  {v}
                  {i === 11 && <Slot $w={8}><CloseX color={r === 0 ? "#b3a79d" : "#8c8c8c"} size={5.5} w={1.6} /></Slot>}
                </Cell>
              ))}
            </Row>
          ))}
        </Table>
        <Scrollbar before={0} thumb={69} />
      </TableBox>
      <PanelTabs>
        {terminalTabs.map(([t, w, badge], i) => (
          <Tab key={t} $w={w} $on={i === 0}>{t}{badge && <Badge>{badge}</Badge>}</Tab>
        ))}
      </PanelTabs>
    </TerminalMain>
  </Terminal>
);

const TaskIcons = () => (
  <TaskButtons>
    <TaskButton $w={33}>
      <svg width="19" height="19" viewBox="0 0 19 19"><path d="M0 3l8-1.2v7.3H0zM9 1.7L19 .2v8.9H9zM0 10h8v7.3L0 16.2zM9 10h10v8.9L9 17.4z" fill="#fff" /></svg>
    </TaskButton>
    <TaskButton $w={42}>
      <svg width="23" height="22" viewBox="0 0 23 22"><rect x="1" y="1" width="9" height="18" fill="#1c7ec4" /><path d="M2.5 4h6" stroke="#9bd3f5" /><path d="M6 12h15v8H6z" fill="#8d9aa3" stroke="#5f6c75" /><path d="M11 12v-2h5v2M6 15.5h15" stroke="#dfe6ea" fill="none" /></svg>
    </TaskButton>
    <TaskButton $w={43}>
      <svg width="20" height="17" viewBox="0 0 20 17"><path d="M4 0h16l-4 17H0z" fill="#2a6fae" /><path d="M6 3.5l5 4.7-7 5M10.5 13H15" stroke="#fff" strokeWidth="1.8" fill="none" /></svg>
    </TaskButton>
    <TaskButton $w={35} $open>
      <svg width="23" height="21" viewBox="0 0 23 21"><path d="M1 2h7l2 2h11v14H1z" fill="#e9c766" /><path d="M3 5h17v12H3z" fill="#fff6cf" /><path d="M1 8h21v11H1z" fill="#f8e08e" /><path d="M5 20v-5c0-2 2-3 6.5-3s6.5 1 6.5 3v5" stroke="#73b6e2" strokeWidth="2.5" fill="none" /></svg>
    </TaskButton>
    <TaskButton $w={3} $open />
    <TaskButton $w={3} $open />
    <TaskButton $w={41} $open>
      <svg width="22" height="21" viewBox="0 0 22 21"><rect x="3" y="1" width="13" height="10" fill="#fff" stroke="#3e7fc1" /><rect x="9" y="6" width="12" height="12" fill="#e8f3ff" stroke="#3e7fc1" /><path d="M3 3h13M9 8h12" stroke="#3e7fc1" strokeWidth="2" /><path d="M11 15l3-4 2 3 3-4" stroke="#3566c0" fill="none" /><circle cx="6" cy="9" r="3.2" fill="#c9854b" /><path d="M0 20c0-5 2.5-7 6-7s6 2 6 7z" fill="#4fae3d" /></svg>
    </TaskButton>
    <TaskButton $w={41} $on><QLogo size={20} /></TaskButton>
    <TaskButton $w={43} $open>
      <svg width="20" height="20" viewBox="0 0 20 20"><circle cx="10" cy="10" r="10" fill="#34a353" /><path d="M10 10L1.34 5A10 10 0 0 1 18.66 5z" fill="#e8402f" /><path d="M10 5h8.66A10 10 0 0 1 10 20l4.3-7.5z" fill="#fbc116" /><path d="M1.34 5L5.7 12.5 10 10V5z" fill="#e8402f" /><path d="M1.34 5l4.3 7.5L10 14.5 10 20A10 10 0 0 1 1.34 5z" fill="#34a353" /><circle cx="10" cy="10" r="4.9" fill="#fff" /><circle cx="10" cy="10" r="3.9" fill="#3a7ff0" /></svg>
    </TaskButton>
  </TaskButtons>
);

const App = () => (
  <Desktop>
    <GlobalStyle />
    <TitleBar>
      <QLogo />
      <TitleText>51018464: Exness-Real18 - Exness Technologies Ltd - [AUDCAD,H1]</TitleText>
      <WindowButtons>
        <WindowButton $w={19}><Icon size={8}><path d="M1 9.5h12" stroke="#111" strokeWidth="3.5" /></Icon></WindowButton>
        <WindowButton $w={19}><Icon size={8}><path d="M1.5 5.5h7v7h-7zM5 5V2h7v7.5H9" stroke="#111" strokeWidth="2.2" /></Icon></WindowButton>
        <WindowButton $w={32} $close><CloseX size={6.5} w={2.2} /></WindowButton>
      </WindowButtons>
    </TitleBar>
    <MenuBar>
      <MenuItem $w={15.5}><WindowsIcon /></MenuItem>
      <MenuItem $w={24}>File</MenuItem>
      <MenuItem $w={29}>View</MenuItem>
      <MenuItem $w={32}>Insert</MenuItem>
      <MenuItem $w={35}>Charts</MenuItem>
      <MenuItem $w={31.5}>Tools</MenuItem>
      <MenuItem $w={42}>Window</MenuItem>
      <MenuItem $w={30}>Help</MenuItem>
      <MdiButtons>
        <MdiButton><Icon size={7}><path d="M3 12h8" stroke="#111" strokeWidth="2.5" /></Icon></MdiButton>
        <MdiButton><Icon size={7}><path d="M1.5 6.5h7v6h-7zM4.5 5V2h8v6H10" stroke="#111" strokeWidth="2" /></Icon></MdiButton>
        <MdiButton><CloseX color="#111" size={5.5} w={2.2} /></MdiButton>
      </MdiButtons>
    </MenuBar>
    <ToolbarArea>
      <Toolbars>
        <MainToolbar />
        <LineToolbar />
      </Toolbars>
      <ToolEnd>
        <svg width="10" height="13" viewBox="0 0 10 13" fill="none"><circle cx="6" cy="4.5" r="2.9" stroke="#3a6fd0" strokeWidth="1.3" /><path d="M4 7L1 10.5" stroke="#3a6fd0" strokeWidth="1.8" /></svg>
        <svg width="17" height="15" viewBox="0 0 17 15"><path d="M1 8c0-2 7-2 8 1 0 2-3 3-4 3l-1 2-1-2.3C1.5 11 1 10 1 8z" fill="#ddd" stroke="#aaa" strokeWidth=".7" /><circle cx="10.5" cy="5.5" r="5.5" fill="#e03020" /><text x="8.7" y="8.5" fontSize="8" fill="#fff">1</text></svg>
      </ToolEnd>
    </ToolbarArea>
    <Workspace>
      <Side>
        <MarketWatch />
        <ScrollSpace $h={3.5} />
        <Navigator />
      </Side>
      <ChartColumn>
        <ChartFrame>
          <Chart />
          <EaPanel>
            <EaTitle>Bumblebee v1.2</EaTitle>
            <EaLine>Bumblebee v 1.4 AUDCAD H1 v1.1</EaLine>
            {eaRows.map(([label, value]) => (
              <EaRow key={label}>
                <EaLabel>{label}</EaLabel>
                <EaValue>{value}</EaValue>
              </EaRow>
            ))}
            <EaButton>Close All Orders</EaButton>
          </EaPanel>
        </ChartFrame>
        <ChartTabs>
          {chartTabs.map(([t, w]) => (
            <ChartTab key={t} $w={w} $on={t === "AUDCAD,H1"}>{t}</ChartTab>
          ))}
          <TabArrows>
            <Icon size={5}><path d="M10 1v12L3 7z" fill="#888" /></Icon>
            <Icon size={5}><path d="M4 1v12l7-6z" fill="#888" /></Icon>
          </TabArrows>
        </ChartTabs>
      </ChartColumn>
    </Workspace>
    <Orders />
    <StatusBar>
      <StatusCell $w={823} $first>For Help, press F1</StatusCell>
      <StatusCell $w={78}>Default</StatusCell>
      <StatusCell $w={68.5} />
      <StatusCell $w={48} />
      <StatusCell $w={47.5} />
      <StatusCell $w={46} />
      <StatusCell $w={47} />
      <StatusCell $w={44.5} />
      <StatusCell $w={86} $tight>
        <svg width="16" height="10" viewBox="0 0 16 10"><path d="M.5 0v10M2.5 0v10M4.500 0v10M6.500 0v10M8.500 0v10M10.500 0v10M12.500 0v10M14.500 0v10" stroke="#6f8a2a" /><path d="M.5 9v1M2.500 8v2M4.500 7v3M6.500 6v4M8.500 5v5M10.500 4v6M12.500 3v7M14.500 2v8" stroke="#16365c" /></svg>
        721871/1177 kb
      </StatusCell>
    </StatusBar>
    <Taskbar>
      <TaskIcons />
      <Tray>
        <Icon size={6}><path d="M1 10h12L7 3z" fill="#10313d" /></Icon>
        <svg width="12" height="12" viewBox="0 0 12 12"><path d="M2 1v10M2 1.5h3l1 1h4v5H6l-1-1H2" stroke="#f2f8fa" fill="#c9dde4" strokeWidth="1.2" /><circle cx="8" cy="8" r="3.5" fill="#d9362a" /><path d="M6.6 6.6l2.8 2.8M9.4 6.6L6.6 9.4" stroke="#fff" /></svg>
        <svg width="12" height="12" viewBox="0 0 12 12" fill="none"><rect x="3.5" y="3" width="7.5" height="5.5" fill="#8fb9c7" stroke="#eef7fa" /><path d="M7 8.5V11M4.5 11h5M1 1v3h3V1M2.5 4v6h2" stroke="#eef7fa" /></svg>
        <svg width="12" height="12" viewBox="0 0 12 12" fill="none"><path d="M1 4h2l3-3v10L3 8H1z" fill="#eef7fa" stroke="#6f98a6" strokeWidth=".6" /><path d="M7.5 4c1 1.5 1 2.5 0 4M9 2.5c2 2.5 2 4.5 0 7M10.5 1.5c2 3 2 6 0 9" stroke="#eef7fa" strokeWidth=".8" /></svg>
        <Clock><span>8:34 AM</span><span>5/23/2022</span></Clock>
      </Tray>
    </Taskbar>
    <Watermark>
      <WatermarkTitle>Activate Windows</WatermarkTitle>
      Go to System in Control Panel to activate Windows.
    </Watermark>
    <Overlay width="1290" height="725" fill="none" stroke="#bd744d" strokeWidth="1.6">
      <ellipse cx="1188.2" cy="73.2" rx="70.3" ry="31" />
      <ellipse cx="1206" cy="483.5" rx="83" ry="18.3" />
    </Overlay>
  </Desktop>
);

export default App;
